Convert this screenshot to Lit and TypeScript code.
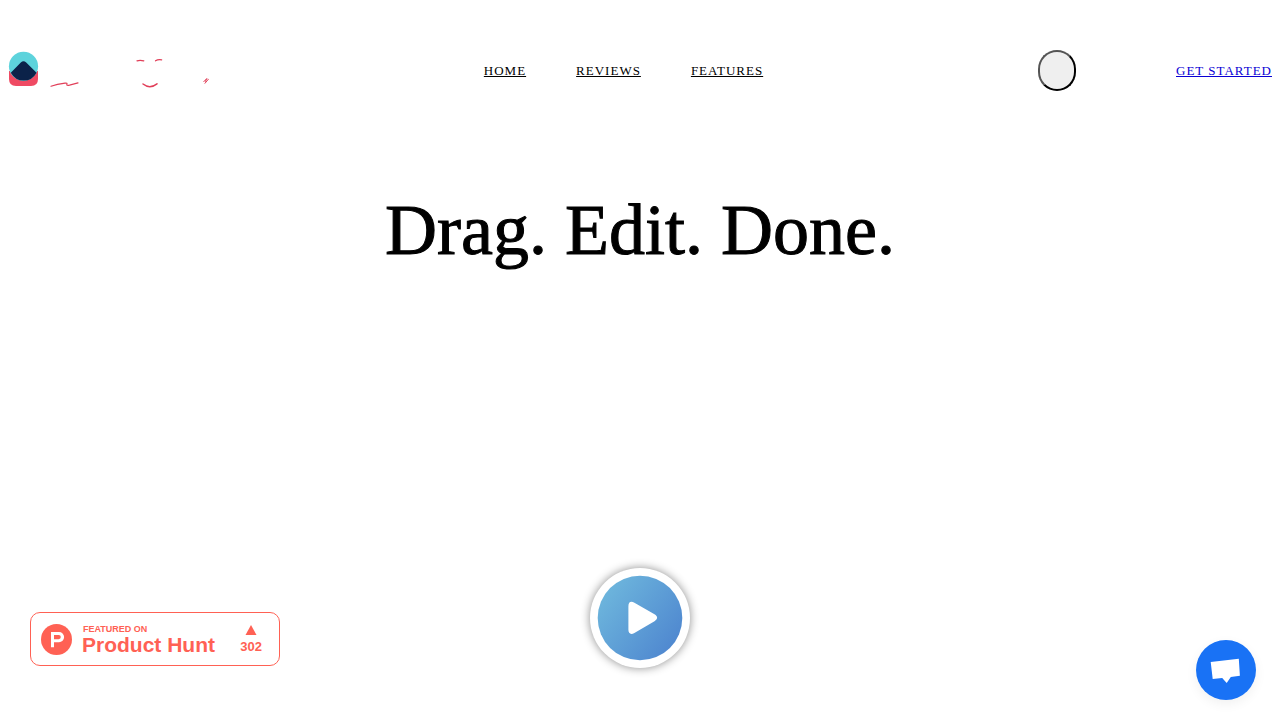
import { LitElement, html, css } from "lit";
import { customElement } from "lit/decorators.js";

@customElement("app-root")
export class AppRoot extends LitElement {
  static styles = css`
    :host {
      display: flex;
      flex-direction: column;
      box-sizing: border-box;
      min-height: 100vh;
      background: #fff;
      color: #000;
      font-family: "Liberation Serif", "Times New Roman", serif;
    }
    * {
      box-sizing: border-box;
    }
    header {
      display: flex;
      justify-content: space-between;
      align-items: center;
      padding: 40px 8px 0;
      font-size: 13px;
      line-height: 18px;
      letter-spacing: 1px;
    }
    svg {
      display: block;
    }
    .logo {
      display: block;
    }
    nav {
      display: flex;
      gap: 50px;
      padding-top: 2px;
    }
    nav a {
      color: #000;
    }
    .actions {
      display: flex;
      align-items: center;
      gap: 100px;
    }
    .toggle {
      width: 38px;
      height: 41px;
      padding: 0;
      border: 2px outset #000;
      border-radius: 20px;
      background: #efefef;
    }
    .cta {
      padding-top: 2px;
      color: #0a00d4;
    }
    main {
      display: flex;
      flex-direction: column;
      flex: 1;
      align-items: center;
      justify-content: space-between;
      padding: 88px 0 52px;
    }
    h1 {
      margin: 0;
      font-size: 72px;
      font-weight: 400;
      line-height: 84px;
      text-align: center;
      -webkit-text-stroke: 1px #000;
    }
    .play {
      width: 100px;
      height: 100px;
      padding: 0;
      border: 0;
      border-radius: 50%;
      background: #fff;
      box-shadow: 0 0 10px rgba(0, 0, 0, 0.45);
    }
    .badge {
      position: fixed;
      left: 30px;
      bottom: 54px;
      display: flex;
      align-items: center;
      width: 250px;
      height: 54px;
      padding: 0 17px 0 10px;
      border: 1px solid #ff6154;
      border-radius: 10px;
      background: #fff;
      color: #ff6154;
      font-family: "Liberation Sans", Arial, sans-serif;
      font-weight: 700;
      text-decoration: none;
    }
    .names {
      display: flex;
      flex-direction: column;
      flex: 1;
      padding: 2px 0 0 10px;
      white-space: nowrap;
    }
    .small {
      padding-left: 1px;
      font-size: 9px;
      line-height: 10px;
    }
    .large {
      font-size: 21px;
      line-height: 22px;
    }
    .votes {
      display: flex;
      flex-direction: column;
      align-items: center;
      gap: 4px;
      padding-top: 1px;
      font-size: 13px;
      line-height: 16px;
    }
    .chat {
      position: fixed;
      right: 24px;
      bottom: 20px;
      width: 60px;
      height: 60px;
      padding: 0;
      border: 0;
      border-radius: 50%;
      background: #1972f5;
      box-shadow: 0 4px 12px rgba(0, 0, 0, 0.06);
    }
  `;

  render() {
    return html`
      <header>
        <a class="logo" href="#home" aria-label="Home page">
          <svg width="201" height="60" viewBox="8 40 201 60" fill="none">
            <path fill="#ef4a63" d="M9 71H38V79Q38 86 31 86H16Q9 86 9 79Z" />
            <circle cx="23.5" cy="66.3" r="14.6" fill="#5dd3dc" />
            <path fill="#0b2249" d="M10.8 72.7L20.8 62.5Q23.5 59.8 26.2 62.5L36.6 72.7Q32.2 80.6 23.7 80.6Q15.3 80.6 10.8 72.7Z" />
            <g stroke="#e13f59" stroke-width="1.2" stroke-linecap="round">
              <path d="M51 86.2Q57 84.2 65 83.1Q67.7 82.8 66.8 84.6Q66.6 85.7 69.5 85.1L78 82.8" />
              <path d="M137 60.9Q140 59.8 143.8 60.9M155.5 60.8Q158 59.1 161.7 59.8" />
              <path d="M143 84Q149.8 89.4 157 83.8" stroke-width="1.5" />
              <path d="M203.8 81.6L206.6 78.8M205 83.3L208.4 79.2M206.6 78.8L205.4 81.4" stroke-width="1" />
            </g>
          </svg>
        </a>
        <nav>
          <a href="#home">HOME</a>
          <a href="#reviews">REVIEWS</a>
          <a href="#features">FEATURES</a>
        </nav>
        <div class="actions">
          <button class="toggle" aria-label="Menu"></button>
          <a class="cta" href="#start">GET STARTED</a>
        </div>
      </header>
      <main>
        <h1>Drag. Edit. Done.</h1>
        <button class="play" aria-label="Play video">
          <svg width="100" height="100" viewBox="0 0 100 100">
            <defs>
              <linearGradient id="sky" x1="0.1" y1="0.2" x2="0.9" y2="0.8">
                <stop offset="0" stop-color="#6cb4dc" />
                <stop offset="1" stop-color="#5089d0" />
              </linearGradient>
            </defs>
            <circle cx="50" cy="50" r="42.3" fill="url(#sky)" />
            <path fill="#fff" d="M38.4 38.2C38.4 34 41 32.8 44.4 34.8L64.5 46.3C68 48.3 68 51.2 64.5 53.2L44.4 64.9C41 67 38.4 65.8 38.4 61.8Z" />
          </svg>
        </button>
      </main>
      <a class="badge" href="#product-hunt">
        <svg width="31" height="31" viewBox="0 0 31 31">
          <circle cx="15.5" cy="15.5" r="15.5" fill="#ff6154" />
          <path fill="#fff" fill-rule="evenodd" d="M10 8H18A5 5 0 0 1 18 18.2H13V23.3H10ZM13 11V15.2H17.7A2.1 2.1 0 0 0 17.7 11Z" />
        </svg>
        <span class="names">
          <span class="small">FEATURED ON</span>
          <span class="large">Product Hunt</span>
        </span>
        <span class="votes">
          <svg width="12" height="10" viewBox="0 0 12 10"><path fill="#ff6154" d="M6 0L11.5 10H0.5Z" /></svg>
          <span>302</span>
        </span>
      </a>
      <button class="chat" aria-label="Open chat">
        <svg width="60" height="60" viewBox="0 0 60 60">
          <path fill="#fff" d="M14.7 22L42.8 18.7L43.9 35.8L34.8 37.1L30.7 43L26.2 38L16.7 39Z" />
        </svg>
      </button>
    `;
  }
}
